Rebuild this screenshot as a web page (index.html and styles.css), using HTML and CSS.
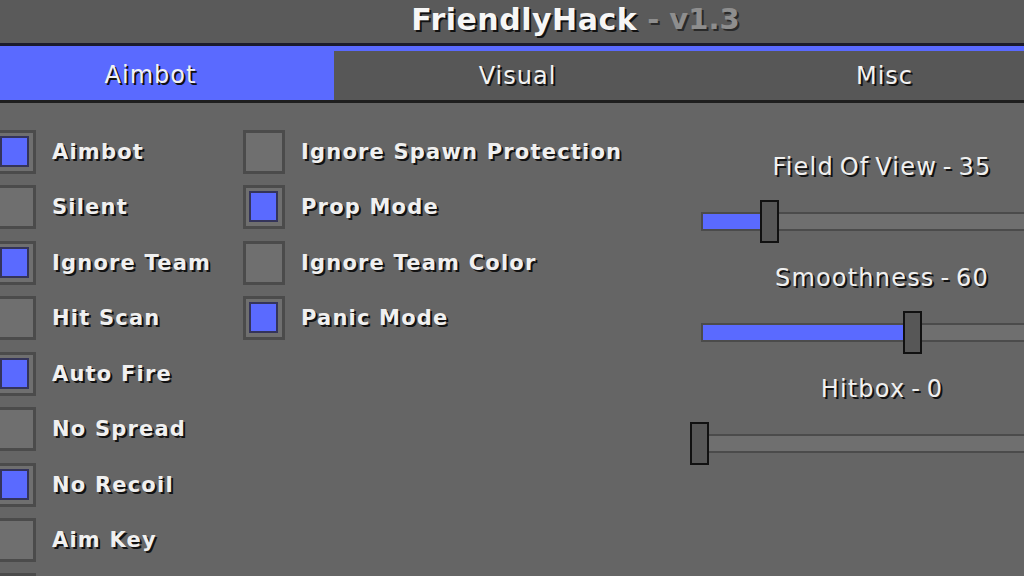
FILE: index.html
```html
<!DOCTYPE html>
<html>
<head>
<meta charset="utf-8">
<link rel="stylesheet" href="styles.css">
</head>
<body>
<div class="window">
  <div class="titlebar">
    <span class="title">FriendlyHack</span><span class="version"> - v1.3</span>
  </div>
  <div class="tabs">
    <div class="tab active">Aimbot</div>
    <div class="tab">Visual</div>
    <div class="tab">Misc</div>
  </div>
  <div class="content">
    <div class="col">
      <div class="opt"><span class="cb on"><i></i></span><span class="lbl">Aimbot</span></div>
      <div class="opt"><span class="cb"></span><span class="lbl">Silent</span></div>
      <div class="opt"><span class="cb on"><i></i></span><span class="lbl">Ignore Team</span></div>
      <div class="opt"><span class="cb"></span><span class="lbl">Hit Scan</span></div>
      <div class="opt"><span class="cb on"><i></i></span><span class="lbl">Auto Fire</span></div>
      <div class="opt"><span class="cb"></span><span class="lbl">No Spread</span></div>
      <div class="opt"><span class="cb on"><i></i></span><span class="lbl">No Recoil</span></div>
      <div class="opt"><span class="cb"></span><span class="lbl">Aim Key</span></div>
      <div class="opt"><span class="cb"></span></div>
    </div>
    <div class="col">
      <div class="opt"><span class="cb"></span><span class="lbl">Ignore Spawn Protection</span></div>
      <div class="opt"><span class="cb on"><i></i></span><span class="lbl">Prop Mode</span></div>
      <div class="opt"><span class="cb"></span><span class="lbl">Ignore Team Color</span></div>
      <div class="opt"><span class="cb on"><i></i></span><span class="lbl">Panic Mode</span></div>
    </div>
    <div class="sliders">
      <div class="slider">
        <div class="slabel">Field Of View - 35</div>
        <div class="track inset"><div class="fill" style="width:59px"></div><div class="knob" style="left:57px"></div></div>
      </div>
      <div class="slider">
        <div class="slabel">Smoothness - 60</div>
        <div class="track inset"><div class="fill" style="width:202px"></div><div class="knob" style="left:200px"></div></div>
      </div>
      <div class="slider">
        <div class="slabel">Hitbox - 0</div>
        <div class="track"><div class="fill" style="width:0px"></div><div class="knob" style="left:-2px"></div></div>
      </div>
    </div>
  </div>
</div>
</body>
</html>
```

FILE: styles.css
```css
html, body {
  margin: 0;
  padding: 0;
  width: 1024px;
  height: 576px;
  overflow: hidden;
  background: #656565;
}

.window {
  width: 1101px;
  height: 576px;
  overflow: hidden;
  margin-left: -33px;
  font-family: "DejaVu Sans", Verdana, sans-serif;
  color: #f2f2f2;
}

.titlebar {
  height: 43px;
  background: #5a5a5a;
  display: flex;
  align-items: center;
  justify-content: center;
  padding-left: 116px;
  padding-bottom: 5px;
  box-sizing: border-box;
  white-space: pre;
}

.title {
  font-weight: bold;
  font-size: 30px;
  letter-spacing: 0.5px;
  color: #f6f6f6;
  text-shadow: 2px 2px 0 #111;
}

.version {
  font-weight: bold;
  font-size: 29px;
  color: #8e8e8e;
  text-shadow: 2px 2px 0 #2a2a2a;
}

.tabs {
  display: grid;
  grid-template-columns: 1fr 1fr 1fr;
  border-top: 3px solid #1b1b2c;
  border-bottom: 3px solid #1e1e1e;
  padding-top: 5px;
  background: #5a6aff;
}

.tab {
  height: 49px;
  display: flex;
  align-items: center;
  justify-content: center;
  background: #575757;
  font-size: 24px;
  letter-spacing: 1px;
  text-shadow: 2px 2px 0 #111;
}

.tab.active {
  background: #5a6aff;
  margin-top: -5px;
  height: 54px;
  padding-top: 4px;
  box-sizing: border-box;
}

.content {
  display: grid;
  grid-template-columns: 249px 447px 384px;
  padding-left: 27px;
  padding-top: 27px;
}

.col {
  display: flex;
  flex-direction: column;
  gap: 11.43px;
}

.opt {
  display: flex;
  align-items: center;
  gap: 16px;
  height: 44px;
}

.cb {
  width: 42px;
  height: 44px;
  box-sizing: border-box;
  border: 3px solid #4b4b4b;
  background: #6f6f6f;
  padding: 3px 4px 4px 3px;
  flex: none;
  display: flex;
}

.cb i {
  display: block;
  flex: 1;
  background: #5a6aff;
  border: 2px solid #34345a;
}

.lbl {
  font-weight: bold;
  font-size: 21px;
  letter-spacing: 1.2px;
  white-space: nowrap;
  color: #f0f0f0;
  text-shadow: 2px 2px 0 #121212;
}

.sliders {
  display: flex;
  flex-direction: column;
  padding-top: 22px;
}

.slider {
  height: 111px;
}

.slabel {
  height: 30px;
  line-height: 30px;
  text-align: center;
  font-size: 24px;
  letter-spacing: 1.2px;
  word-spacing: -3px;
  white-space: nowrap;
  color: #f0f0f0;
  text-shadow: 2px 2px 0 #121212;
}

.track {
  position: relative;
  margin-top: 30px;
  height: 19px;
  box-sizing: border-box;
  border: 2px solid #4b4b4b;
  background: #6f6f6f;
}

.track.inset {
  margin-left: 11px;
}

.fill {
  height: 100%;
  background: #5a6aff;
}

.knob {
  position: absolute;
  top: -14px;
  width: 19px;
  height: 43px;
  box-sizing: border-box;
  border: 2px solid #111;
  background: #575757;
}
```
